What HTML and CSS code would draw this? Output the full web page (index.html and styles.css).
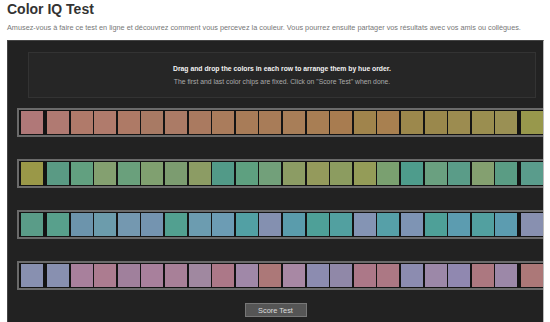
FILE: index.html
```html
<!DOCTYPE html>
<html lang="fr">
<head>
  <meta charset="UTF-8">
  <meta name="viewport" content="width=device-width, initial-scale=1.0">
  <title>Color IQ Test</title>
  <link rel="stylesheet" href="styles.css">
</head>
<body>

<div id="page">
  <h1>Color IQ Test</h1>
  <p class="intro">Amusez-vous à faire ce test en ligne et découvrez comment vous percevez la couleur. Vous pourrez ensuite partager vos résultats avec vos amis ou collègues.</p>

  <div class="test-panel">
    <div class="instructions">
      <p class="lead">Drag and drop the colors in each row to arrange them by hue order.</p>
      <p class="note">The first and last color chips are fixed. Click on "Score Test" when done.</p>
    </div>

    <div id="rows"></div>

    <div class="actions">
      <button class="score-btn">Score Test</button>
    </div>
  </div>
</div>

<script>
  const rows = [
    ['#b07878', '#b07a72', '#b07a6a', '#b07b6c', '#ae7a66', '#a87a64', '#ab7b66', '#aa7a60', '#aa7c5c', '#a87c58', '#a87c58',
     '#a87e58', '#a87e54', '#a87c50', '#a0844c', '#a88050', '#9c884c', '#9a884c', '#9c8c50', '#9a8e50', '#9a9054', '#98984c'],
    ['#9a9848', '#5a9a84', '#62a080', '#84a070', '#6aa07c', '#80a070', '#7c9c70', '#8c9c64', '#529a88', '#5ea080', '#72a07a',
     '#8c9c64', '#949a5c', '#8c9c60', '#949c58', '#7aa070', '#4e9c8c', '#6aa080', '#5a9c88', '#84a070', '#5a9c84', '#5a9c8c'],
    ['#5a9c88', '#58a08c', '#6c94ac', '#6c9cac', '#7498b0', '#7494b0', '#52a090', '#6c9cb0', '#6c9cb4', '#52a0a4', '#8490b0',
     '#5a9cac', '#4ea098', '#52a0a0', '#8494b4', '#56a0a8', '#7e94b4', '#4ea098', '#5c9cb0', '#52a0a0', '#5c9cb0', '#8890b0'],
    ['#8890b0', '#8890b0', '#a8809c', '#ac7c90', '#a0809c', '#a8809c', '#a88098', '#a088a0', '#ac7888', '#a088a8', '#ac7878',
     '#a888a4', '#8c8cb0', '#9088a8', '#ac7888', '#ac7884', '#8c8cb0', '#9c88a8', '#9088b0', '#ac7880', '#9c88a8', '#ac7878']
  ];

  function chip(color) {
    const el = document.createElement('div');
    el.className = 'chip';
    el.style.background = color;
    return el;
  }

  const holder = document.getElementById('rows');
  rows.forEach(function (colors) {
    const row = document.createElement('div');
    row.className = 'chip-row';

    const first = chip(colors[0]);
    first.classList.add('fixed');
    row.appendChild(first);

    const middle = document.createElement('div');
    middle.className = 'movable';
    colors.slice(1, -1).forEach(function (c) {
      middle.appendChild(chip(c));
    });
    row.appendChild(middle);

    const last = chip(colors[colors.length - 1]);
    last.classList.add('fixed');
    row.appendChild(last);

    holder.appendChild(row);
  });
</script>

</body>
</html>
```

FILE: styles.css
```css
body {
  font-family: 'Liberation Sans', Arial, sans-serif;
  background-color: #fff;
  margin: 0;
  padding: 0;
  height: 322px;
  overflow: hidden;
}

#page {
  padding: 0 6px 0 7px;
}

h1 {
  font-size: 14px;
  line-height: 17px;
  font-weight: bold;
  color: #333;
  margin: 1px 0 0;
}

.intro {
  font-size: 7.3px;
  line-height: 10px;
  color: #777;
  margin: 5px 0 0;
  white-space: nowrap;
}

.test-panel {
  margin-top: 7px;
  height: 281px;
  background-color: #222;
  border: 1px solid #444;
  border-bottom: none;
  border-right-color: #bbb;
  overflow: hidden;
}

.instructions {
  margin: 11px 7px 0 20px;
  height: 44px;
  background-color: #262626;
  border: 1px solid #333;
  text-align: center;
}

.instructions p {
  margin: 0;
  white-space: nowrap;
}

.lead {
  padding-top: 11px;
  font-size: 6.8px;
  line-height: 10px;
  font-weight: bold;
  color: #f2f2f2;
}

.note {
  margin-top: 3px !important;
  font-size: 6.8px;
  line-height: 10px;
  color: #aaa;
}

#rows {
  display: flex;
  flex-direction: column;
  gap: 22px;
  margin: 10px 0 0 9px;
}

.chip-row {
  display: flex;
  width: max-content;
  padding: 1px 2px;
  background-color: #141414;
  border: 2px solid #6a6a6a;
}

.chip {
  width: 22px;
  height: 23px;
}

.chip-row .fixed:first-child {
  margin-right: 4px;
}

.chip-row .fixed:last-child {
  margin-left: 3.6px;
}

.movable {
  display: grid;
  grid-template-columns: repeat(20, 22px);
  column-gap: 1.6px;
}

.actions {
  display: flex;
  justify-content: center;
  margin-top: 13px;
}

.score-btn {
  width: 62px;
  height: 14px;
  padding: 0;
  font-family: 'Liberation Sans', Arial, sans-serif;
  font-size: 7.4px;
  color: #ddd;
  background-color: #555;
  border: 1px solid #777;
  cursor: pointer;
}

.score-btn:hover {
  background-color: #606060;
}
```
